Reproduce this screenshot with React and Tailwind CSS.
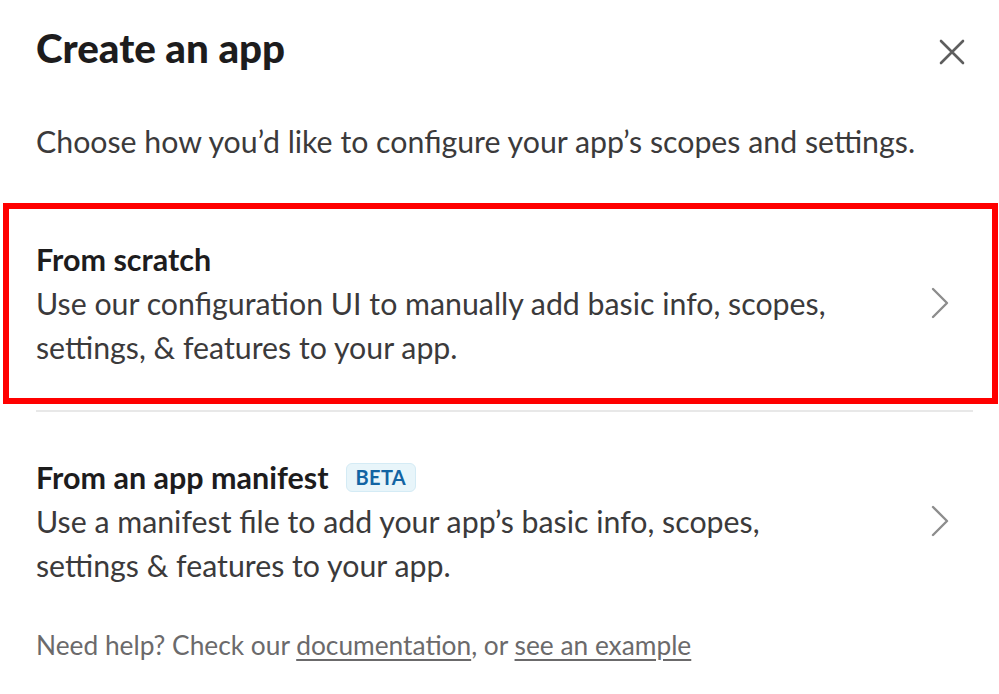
import React from 'react'

const Chevron = () => (
    <svg width="20" height="34" viewBox="0 0 20 34" fill="none" className="shrink-0">
        <path d="M3 3 L17 17 L3 31" stroke="#8d8d8d" strokeWidth="2.4" strokeLinecap="round" strokeLinejoin="round" />
    </svg>
)

const CloseIcon = () => (
    <svg width="26" height="26" viewBox="0 0 26 26" fill="none">
        <path d="M2 2 L24 24 M24 2 L2 24" stroke="#5e5e5e" strokeWidth="2.6" strokeLinecap="round" />
    </svg>
)

const Option = ({ title, badge, lines, highlighted }) => (
    <div
        className={
            highlighted
                ? 'flex items-center justify-between border-[6px] border-[#ff0000] pl-[27px] pr-[42px] pt-[28px] pb-[29px] -ml-[33px] -mr-[25px]'
                : 'flex items-center justify-between pt-[43px] pb-[1px] pr-[23px]'
        }
    >
        <div>
            <div className="flex items-center h-[44px]">
                <span className="text-[30.5px] font-bold text-[#1d1c1d] leading-[44px]">{title}</span>
                {badge && (
                    <span className="ml-[17px] h-[29px] px-[9px] rounded-[6px] bg-[#e8f5fa] border border-[#d4ebf5] text-[#1264a3] text-[20px] font-bold leading-[27px] tracking-[0.3px]">
                        {badge}
                    </span>
                )}
            </div>
            {lines.map((l) => (
                <div key={l} className="text-[30.3px] text-[#3b3a3b] leading-[44px]">{l}</div>
            ))}
        </div>
        <Chevron />
    </div>
)

export default function App() {
    return (
        <div
            className="w-[999px] h-[694px] bg-white overflow-hidden pl-[36px] pr-[26px] pt-[20px]"
            style={{ fontFamily: 'Lato, "Noto Sans", sans-serif' }}
        >
            <div className="flex items-center justify-between h-[56px]">
                <h1 className="text-[40.3px] font-black text-[#1d1c1d]">Create an app</h1>
                <div className="mr-[8px] mt-[8px]">
                    <CloseIcon />
                </div>
            </div>

            <p className="mt-[43px] text-[30.3px] text-[#3b3a3b] leading-[44px]">
                Choose how you’d like to configure your app’s scopes and settings.
            </p>

            <div className="mt-[40px]">
                <Option
                    highlighted
                    title="From scratch"
                    lines={[
                        'Use our configuration UI to manually add basic info, scopes,',
                        'settings, & features to your app.',
                    ]}
                />
            </div>

            <div className="mt-[6px] h-[2px] bg-[#e8e8e8]" />

            <Option
                title="From an app manifest"
                badge="BETA"
                lines={[
                    'Use a manifest file to add your app’s basic info, scopes,',
                    'settings & features to your app.',
                ]}
            />

            <p className="mt-[41px] text-[26.3px] text-[#6b6a6b] leading-[32px]">
                Need help? Check our <span className="underline underline-offset-4">documentation</span>, or{' '}
                <span className="underline underline-offset-4">see an example</span>
            </p>
        </div>
    )
}
